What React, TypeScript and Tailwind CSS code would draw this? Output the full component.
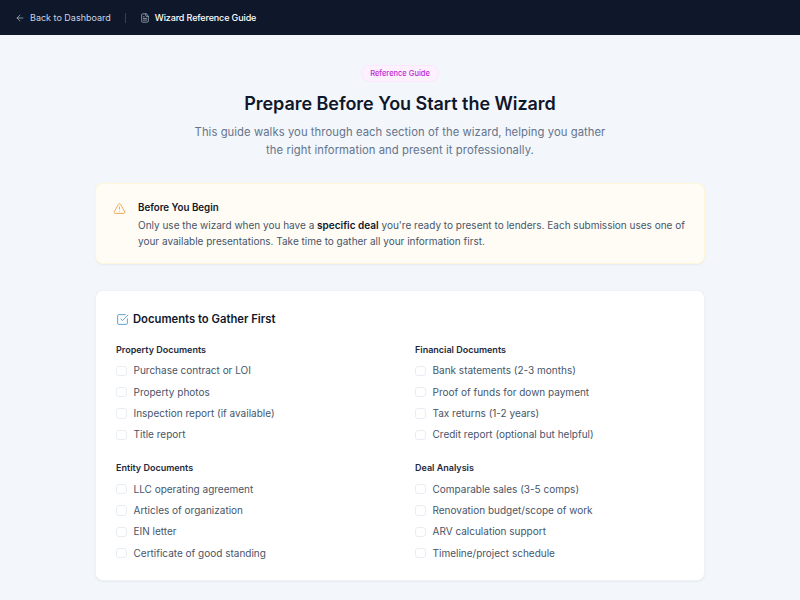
import { AlertTriangle, ArrowLeft, FileText, SquareCheckBig } from "lucide-react";

const groups = [
	{
		title: "Property Documents",
		items: ["Purchase contract or LOI", "Property photos", "Inspection report (if available)", "Title report"],
	},
	{
		title: "Financial Documents",
		items: ["Bank statements (2-3 months)", "Proof of funds for down payment", "Tax returns (1-2 years)", "Credit report (optional but helpful)"],
	},
	{
		title: "Entity Documents",
		items: ["LLC operating agreement", "Articles of organization", "EIN letter", "Certificate of good standing"],
	},
	{
		title: "Deal Analysis",
		items: ["Comparable sales (3-5 comps)", "Renovation budget/scope of work", "ARV calculation support", "Timeline/project schedule"],
	},
];

const App = () => {
	return (
		<div className="h-[600px] overflow-hidden bg-[#f3f6fb] font-['Inter',sans-serif]">
			<header className="flex h-[35px] items-center bg-[#0f172a] px-[15px]">
				<div className="flex items-center gap-[5px] text-[9px] text-[#cbd5e1]">
					<ArrowLeft className="size-[10px]" strokeWidth={1.5} />
					<span>Back to Dashboard</span>
				</div>
				<div className="mx-[14px] h-[10px] w-px bg-[#334155]"></div>
				<div className="flex items-center gap-[5px] text-[9px] font-medium tracking-[-0.13px] text-white">
					<FileText className="size-[10px] text-[#cbd5e1]" strokeWidth={1.5} />
					<span>Wizard Reference Guide</span>
				</div>
			</header>
			<main className="mx-auto w-[610px] pt-[30px]">
				<div className="flex flex-col items-center text-center">
					<span className="flex h-[17px] items-center rounded-full border border-[#fae8ff] bg-[#fdf0ff] px-2 text-[7.5px] font-medium text-[#c026d3]">
						Reference Guide
					</span>
					<h1 className="mt-[9px] text-[18px] leading-[26px] font-semibold tracking-[-0.05px] text-[#0f172a]">
						Prepare Before You Start the Wizard
					</h1>
					<p className="mt-[6px] w-[420px] text-[11.25px] leading-[18px] tracking-[0.07px] text-[#64748b]">
						This guide walks you through each section of the wizard, helping you gather the right information and present it professionally.
					</p>
				</div>
				<section className="mt-[24px] flex h-[81px] gap-[12px] rounded-lg border border-[#fef3c7]/60 bg-[#fffcf5] px-[17px] pt-[16px] shadow-[0_1px_2px_rgba(0,0,0,0.05)]">
					<AlertTriangle className="mt-[2px] size-[13px] shrink-0 text-[#e8963c]" strokeWidth={1.5} />
					<div>
						<h2 className="text-[9.75px] leading-[15px] font-semibold text-[#0f172a]">Before You Begin</h2>
						<p className="mt-[2px] text-[10px] leading-[16px] text-[#475569]">
							Only use the wizard when you have a <strong className="font-semibold text-[#0f172a]">specific deal</strong> you're ready to present to lenders. Each submission uses one of your available presentations. Take time to gather all your information first.
						</p>
					</div>
				</section>
				<section className="mt-[26px] h-[291px] rounded-lg border border-[#e2e8f0]/60 bg-white px-5 pt-[20px] shadow-[0_1px_2px_rgba(0,0,0,0.05)]">
					<div className="flex items-center gap-[4px]">
						<SquareCheckBig className="size-[13px] text-[#3b8ec4]" strokeWidth={1.5} />
						<h2 className="text-[11.25px] leading-[16px] font-semibold text-[#0f172a]">Documents to Gather First</h2>
					</div>
					<div className="mt-[16px] grid grid-cols-2 gap-x-[30px] gap-y-[15.8px]">
						{groups.map((group) => (
							<div key={group.title}>
								<h3 className="text-[9px] leading-[13px] font-semibold text-[#1e293b]">{group.title}</h3>
								<ul className="mt-[4.2px]">
									{group.items.map((item) => (
										<li key={item} className="flex h-[21.33px] items-center gap-[7px] text-[10px] text-[#475569]">
											<span className="size-[10.5px] shrink-0 rounded-[3px] border border-[#e8edf3] bg-white"></span>
											<span>{item}</span>
										</li>
									))}
								</ul>
							</div>
						))}
					</div>
				</section>
			</main>
		</div>
	);
};

export default App;
